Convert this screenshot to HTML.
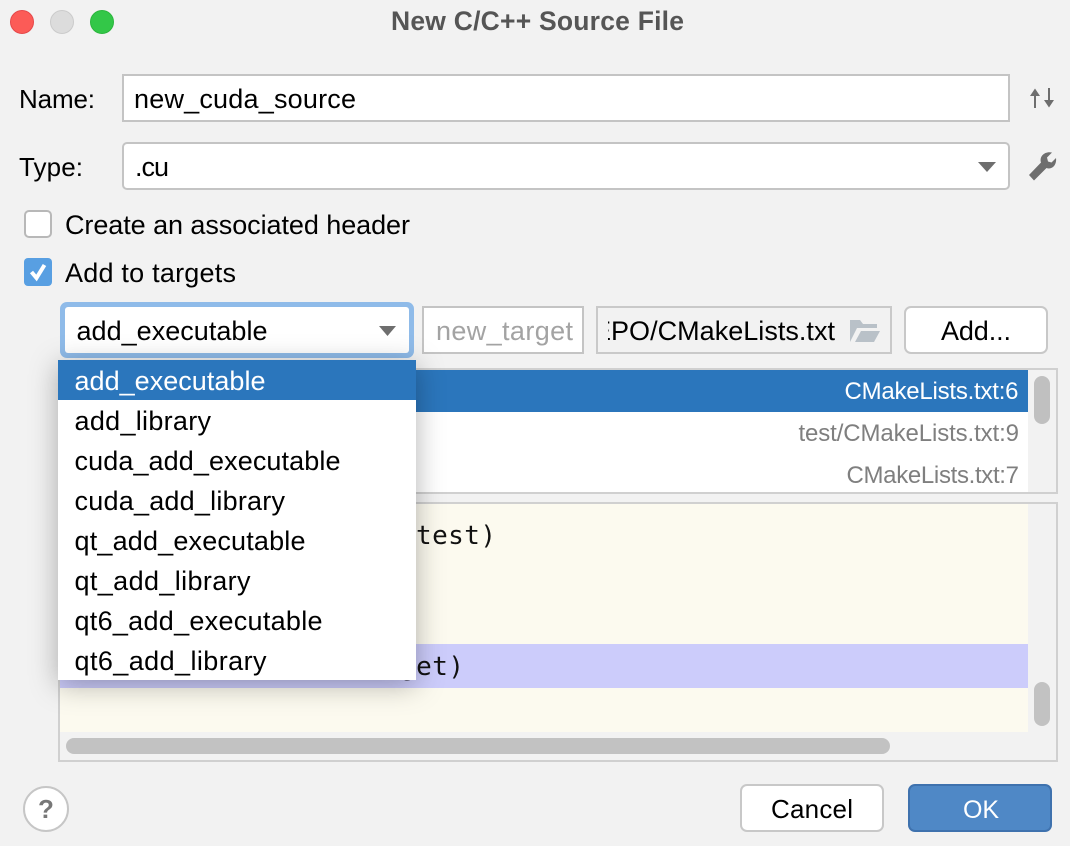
<!DOCTYPE html>
<html><head><meta charset="utf-8"><title>New C/C++ Source File</title>
<style>
html,body{margin:0;padding:0;background:#f2f2f2;width:1070px;height:846px;overflow:hidden}
svg{display:block}
text{font-family:"Liberation Sans",sans-serif;font-size:27px;fill:#000}
.l{font-size:26px}
.m{font-family:"DejaVu Sans Mono",monospace;font-size:26px;fill:#111}
.s{font-size:24px}
.g{fill:#7f7f7f}
</style></head><body>
<svg width="1070" height="846" viewBox="0 0 1070 846" xmlns="http://www.w3.org/2000/svg">
<defs><clipPath id="pc"><rect x="608" y="310" width="227" height="40"/></clipPath></defs>
<rect width="1070" height="846" fill="#f2f2f2"/>
<!-- traffic lights -->
<circle cx="22" cy="22" r="11.5" fill="#fc5b57" stroke="#e5484a" stroke-width="1"/>
<circle cx="62" cy="22" r="11.5" fill="#dcdcdc" stroke="#cbcbcb" stroke-width="1"/>
<circle cx="102" cy="22" r="11.5" fill="#33c748" stroke="#2bb63d" stroke-width="1"/>
<text x="391" y="30" font-weight="700" style="font-size:26.500px;fill:#555" textLength="293">New C/C++ Source File</text>

<!-- name -->
<text x="19" y="108" class="l" textLength="76">Name:</text>
<rect x="123" y="75" width="886" height="46" fill="#fff" stroke="#c4c4c4" stroke-width="2"/>
<text x="134" y="108" textLength="222">new_cuda_source</text>
<path d="M1034 108V94H1036V108ZM1030 96L1035 88.500L1040 96Z" fill="#6e6e6e"/>
<path d="M1048 88V102H1050V88ZM1044 100L1049 107.500L1054 100Z" fill="#6e6e6e"/>

<!-- type -->
<text x="19" y="176" class="l" textLength="64">Type:</text>
<rect x="123" y="143" width="886" height="46" rx="4" fill="#fff" stroke="#c4c4c4" stroke-width="2"/>
<text x="135" y="176" textLength="34">.cu</text>
<path d="M978 162H996L987 172Z" fill="#6e6e6e"/>
<path d="M1029 175L1041 162.500C1039 156 1045 151 1052 152.500L1047 157.500L1048 161.500L1051.500 162.500L1056 158C1057 165 1052 170 1046.500 168L1034 180.500Z" fill="#6e6e6e"/>

<!-- checkboxes -->
<rect x="25" y="211" width="26" height="26" rx="4" fill="#fff" stroke="#b8b8b8" stroke-width="2"/>
<text x="65" y="234" textLength="345">Create an associated header</text>
<rect x="24" y="258" width="28" height="28" rx="4" fill="#589fe2"/>
<path d="M31.500 272L36.500 278L44.500 265" fill="none" stroke="#fff" stroke-width="4"/>
<text x="65" y="282" textLength="171">Add to targets</text>

<!-- row of controls -->
<rect x="60" y="302" width="354" height="56" rx="7" fill="#8fbbe9"/>
<rect x="65" y="307" width="344" height="46" rx="3" fill="#fff"/>
<text x="76.500" y="340" textLength="191">add_executable</text>
<path d="M379 326H396L387.500 336Z" fill="#6e6e6e"/>

<rect x="423" y="307" width="160" height="46" fill="#fff" stroke="#c4c4c4" stroke-width="2"/>
<text x="436" y="340" style="fill:#a3a3a3" textLength="137">new_target</text>

<rect x="597" y="307" width="294" height="46" fill="#f2f2f2" stroke="#c9c9c9" stroke-width="2"/>
<text x="593" y="340" clip-path="url(#pc)">E</text>
<text x="611" y="340" textLength="224">PO/CMakeLists.txt</text>
<path d="M850 342V320H860L863 324H877V328H857L850 342ZM855 342L861 331H880L874 342Z" fill="#b9c1c8"/>

<rect x="905" y="307" width="142" height="46" rx="6" fill="#fff" stroke="#c8c8c8" stroke-width="2"/>
<text x="941" y="340" textLength="70">Add...</text>

<!-- list -->
<rect x="59" y="369" width="998" height="124" fill="#f2f2f2" stroke="#d0d0d0" stroke-width="2"/>
<rect x="60" y="370" width="968" height="122" fill="#fff"/>
<rect x="60" y="370" width="968" height="42" fill="#2b76bc"/>
<text x="844.500" y="399" class="s" style="fill:#fff" textLength="174">CMakeLists.txt:6</text>
<text x="798.500" y="441" class="s g" textLength="220.500">test/CMakeLists.txt:9</text>
<text x="846.500" y="483" class="s g" textLength="172.500">CMakeLists.txt:7</text>
<rect x="1034" y="376" width="16" height="48" rx="8" fill="#c0c0c0"/>

<!-- editor -->
<rect x="59" y="503" width="998" height="258" fill="#f2f2f2" stroke="#d0d0d0" stroke-width="2"/>
<rect x="60" y="504" width="968" height="228" fill="#fcfaef"/>
<rect x="60" y="644" width="968" height="44" fill="#ccccfb"/>
<text x="416" y="544" class="m" textLength="80">test)</text>
<text x="400" y="675" class="m" textLength="64">get)</text>
<rect x="66" y="738" width="824" height="16" rx="8" fill="#c2c2c2"/>
<rect x="1034" y="682" width="16" height="44" rx="8" fill="#c2c2c2"/>

<!-- popup -->
<rect x="58" y="360" width="358" height="320" fill="#fff" style="filter:drop-shadow(0 5px 14px rgba(0,0,0,.3))"/>
<rect x="58" y="360" width="358" height="40" fill="#2b76bc"/>
<text x="74.500" y="390" style="fill:#fff" textLength="191">add_executable</text>
<text x="74.500" y="430" textLength="136.500">add_library</text>
<text x="74.500" y="470" textLength="266">cuda_add_executable</text>
<text x="74.500" y="510" textLength="210.500">cuda_add_library</text>
<text x="74.500" y="550" textLength="231">qt_add_executable</text>
<text x="74.500" y="590" textLength="176">qt_add_library</text>
<text x="74.500" y="630" textLength="248">qt6_add_executable</text>
<text x="74.500" y="670" textLength="192">qt6_add_library</text>

<!-- bottom -->
<circle cx="46" cy="809" r="22" fill="#fff" stroke="#c6c6c6" stroke-width="2"/>
<text x="46" y="818" text-anchor="middle" font-weight="700" style="font-size:26px;fill:#777">?</text>
<rect x="741" y="785" width="142" height="46" rx="6" fill="#fff" stroke="#c8c8c8" stroke-width="2"/>
<text x="771" y="818" class="l" textLength="82">Cancel</text>
<rect x="909" y="785" width="142" height="46" rx="6" fill="#4f88c6" stroke="#3f72ae" stroke-width="2"/>
<text x="963" y="818" style="fill:#fff;font-size:25px" textLength="36">OK</text>
</svg>
</body></html>
